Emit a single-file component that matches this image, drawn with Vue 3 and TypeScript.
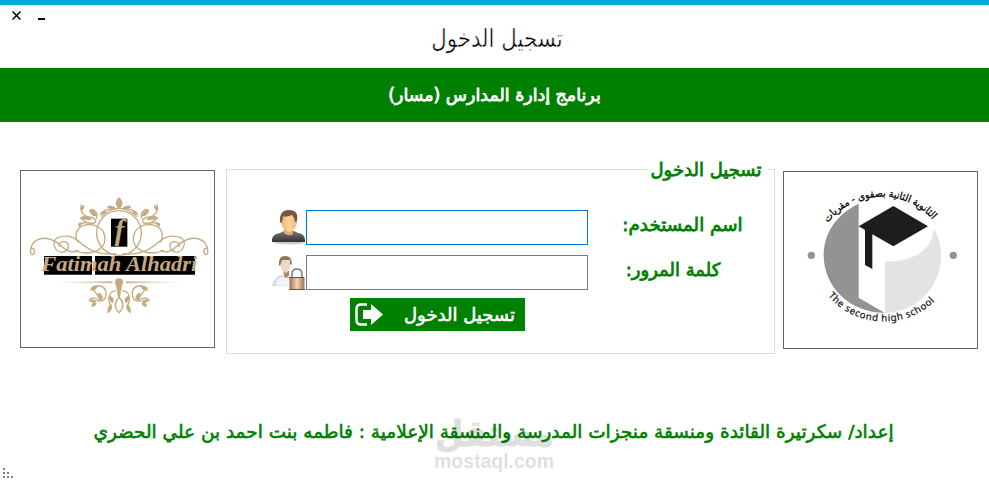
<script setup lang="ts">
import { ref } from 'vue'

const username = ref('')
const password = ref('')
</script>

<template>
  <div class="window">
    <header class="titlebar">
      <div class="controls">
        <button class="ctl" aria-label="close">
          <svg width="9" height="9" viewBox="0 0 9 9"><path d="M.5.5l8 8M8.5.5l-8 8" /></svg>
        </button>
        <button class="ctl minimize" aria-label="minimize">
          <svg width="7" height="2" viewBox="0 0 7 2"><rect width="7" height="2" /></svg>
        </button>
      </div>
      <h1 class="title"><span dir="rtl">تسجيل الدخول</span></h1>
    </header>

    <div class="banner"><span dir="rtl">برنامج إدارة المدارس (مسار)</span></div>

    <main class="content">
      <div class="logo">
        <svg width="195" height="178" viewBox="15 15 585 534">
          <defs>
            <g id="flourish">
              <path d="M303 266C250 272 220 255 190 228C170 211 150 210 128 218C105 230 122 266 145 261C165 255 166 229 145 230C135 231 129 239 133 246" />
              <path d="M190 257C162 267 151 253 138 242C110 218 85 215 64 226C46 236 42 269 52 269C62 266 60 249 50 250" />
              <path d="M191 233C175 215 184 187 207 181C239 172 270 190 270 222C270 250 240 265 210 264C201 264 192 262 180 255" />
              <path d="M200 118C192 135 205 155 223 156C239 156 248 171 237 174C224 177 207 171 196 158M223 136C238 128 251 146 244 162M255 150C265 133 287 131 301 132M191 184Q207 167 222 176M277 127L299 130" />
              <path d="M231 371C244 356 270 361 273 382C275 398 267 409 253 407M221 407C232 395 246 397 252 410M303 377C282 379 277 399 286 420M235 368C237 389 253 385 255 407" />
              <g class="leaf">
                <path d="M208 120Q195 124 198 138Q209 134 208 120ZM195 158Q216 144 231 164Q211 168 195 158ZM222 137Q240 129 245 153Q230 156 222 137ZM259 148Q258 135 273 139Q277 147 259 148ZM190 184Q187 170 203 172Q200 181 190 184Z" />
                <path d="M280 129Q275 119 289 122Q301 124 304 132ZM226 377Q228 358 249 363Q244 378 226 377ZM250 382Q246 400 258 405Q273 396 250 382ZM222 407Q234 399 246 409Q237 419 222 407ZM230 425Q228 410 245 414Q244 425 230 425ZM278 445Q275 424 289 417Q297 432 278 445ZM280 400Q284 386 294 399Q299 410 291 415Z" />
              </g>
            </g>
            <linearGradient id="rule">
              <stop offset="0" stop-color="#c5aa80" stop-opacity="0" />
              <stop offset=".5" stop-color="#c5aa80" />
              <stop offset="1" stop-color="#c5aa80" stop-opacity="0" />
            </linearGradient>
          </defs>
          <g class="gold">
            <use href="#flourish" />
            <use href="#flourish" transform="matrix(-1 0 0 1 625 0)" />
            <circle cx="312" cy="204" r="67" />
            <path d="M258 155Q312 105 367 155" />
            <path class="leaf" d="M312 96Q296 110 307 127L312 132L318 127Q329 110 312 96Z" />
          </g>
          <rect x="288" y="161" width="49" height="84" />
          <path d="M87 273H231V329H87ZM240 273H540V329H240Z" />
          <text class="initial" x="299" y="226">f</text>
          <text class="name" x="79" y="319" textLength="468" lengthAdjust="spacingAndGlyphs">Fatimah Alhadri</text>
          <path d="M96 352L293 349V355ZM528 352L333 349V355Z" fill="url(#rule)" />
          <g class="gold">
            <circle class="leaf" cx="312" cy="352" r="12" />
            <path class="leaf" d="M303 360H321L315 397H309Z" />
            <path d="M312 397Q290 420 312 443Q335 420 312 397Z" />
          </g>
        </svg>
      </div>

      <fieldset class="login">
        <legend><span dir="rtl">تسجيل الدخول</span></legend>
        <div class="row">
          <svg class="icon" width="34" height="35" viewBox="0 0 34 35">
            <defs>
              <linearGradient id="shirt" x2="0" y2="1"><stop stop-color="#777" /><stop offset="1" stop-color="#333" /></linearGradient>
              <linearGradient id="face"><stop stop-color="#e9b27b" /><stop offset=".5" stop-color="#ffd0a0" /><stop offset="1" stop-color="#f4b77f" /></linearGradient>
            </defs>
            <ellipse cx="17" cy="33" rx="15" ry="1.5" fill="#ccc" />
            <path d="M0 32V29Q1 24 8 23L12 21H22L26 23Q33 24 33 30V32Z" fill="url(#shirt)" />
            <path d="M12 19H21V24Q17 27 12 23Z" fill="#e4ad68" />
            <path d="M9 8Q9 2 17 2T25 8V13Q23 21 17 22Q11 20 9 13Z" fill="url(#face)" />
            <path d="M8 12Q7 0 17 0T25 11L23 12Q23 8 20 5Q13 8 11 6Q11 11 9 13Z" fill="#75583e" />
          </svg>
          <input v-model="username" class="field active" type="text" aria-label="اسم المستخدم" />
          <label class="caption user"><span dir="rtl">اسم المستخدم:</span></label>
        </div>
        <div class="row">
          <svg class="icon" width="34" height="35" viewBox="0 0 34 35">
            <defs>
              <linearGradient id="lock"><stop stop-color="#987254" /><stop offset=".5" stop-color="#f3d5b4" /><stop offset="1" stop-color="#9a7555" /></linearGradient>
            </defs>
            <path d="M0 31Q2 21 10 20L18 21V31Z" fill="#d9dbe8" />
            <path d="M4 30Q4 24 10 22L18 24V31Z" fill="#f3f3f9" />
            <path d="M11 16H17V21L13 23Z" fill="#aa8763" />
            <path d="M8 7Q8 1 14 1T19 7L18 13Q16 18 13 18Q9 15 8 7Z" fill="#ead9c4" />
            <path d="M7 10Q6 1 13 1T20 10L18 9V5Q12 5 10 5L8 11Z" fill="#92765b" />
            <path d="M20 23V19Q20 14 25 14T30 19V23" fill="none" stroke="#777b80" stroke-width="1.5" />
            <rect x="17.500" y="22" width="15" height="12" fill="url(#lock)" />
            <path d="M17 34.5H33M17 22.5H32" stroke="#6e513b" />
          </svg>
          <input v-model="password" class="field" type="password" aria-label="كلمة المرور" />
          <label class="caption pass"><span dir="rtl">كلمة المرور:</span></label>
        </div>
        <button class="submit" type="button">
          <svg width="28" height="23" viewBox="0 0 28 23">
            <path d="M12 1.5H6Q1.5 1.5 1.5 6V17Q1.5 21.500 6 21.500H12" fill="none" stroke="#fff" stroke-width="2.500" />
            <path d="M8 7H16V1L28 11.500L16 22V16H8Z" fill="#fff" />
          </svg>
          <span dir="rtl">تسجيل الدخول</span>
        </button>
      </fieldset>

      <div class="logo school">
        <svg width="195" height="178" viewBox="15 18 585 534">
          <defs>
            <path id="arc-top" d="M140 186A206 206 0 0 1 474 176" />
            <path id="arc-bottom" d="M150 392A220 220 0 0 0 482 396" />
          </defs>
          <path d="M242 116C175 148 137 205 137 271C137 365 215 444 321 444L242 398Z" fill="#939393" />
          <path d="M468 191C483 215 489 245 489 272C489 365 418 440 321 444V289C400 291 462 260 468 191Z" fill="#e3e3e3" />
          <path d="M242 184L346 123L450 184L346 244L283 208V312L261 300V195Z" fill="#1d1d1d" />
          <circle cx="100" cy="271" r="11" fill="#939393" />
          <circle cx="526" cy="271" r="11" fill="#939393" />
          <text class="arabic-arc" direction="rtl"><textPath href="#arc-top" startOffset="50%" text-anchor="middle">الثانوية الثانية بصفوى - مقريات</textPath></text>
          <text class="latin-arc"><textPath href="#arc-bottom">The second high school</textPath></text>
        </svg>
      </div>
    </main>

    <footer class="credits">
      <p><span dir="rtl">إعداد/ سكرتيرة القائدة ومنسقة منجزات المدرسة والمنسقة الإعلامية : فاطمه بنت احمد بن علي الحضري</span></p>
      <svg class="watermark" width="122" height="60" viewBox="0 0 122 60">
        <text class="mark" x="1" y="32" textLength="119" lengthAdjust="spacingAndGlyphs">مستقل</text>
        <text class="site" x="0" y="54" textLength="120" lengthAdjust="spacingAndGlyphs">mostaql.com</text>
      </svg>
    </footer>

    <svg class="grip" width="12" height="12" viewBox="0 0 12 12">
      <path d="M0 0h2v2H0zM0 4h2v2H0zM4 4h2v2H4zM0 8h2v2H0zM4 8h2v2H4zM8 8h2v2H8z" />
    </svg>
  </div>
</template>

<style>
body {
  margin: 0;
  background: #fff;
}
</style>

<style scoped>
.window {
  position: relative;
  box-sizing: border-box;
  width: 989px;
  height: 482px;
  overflow: hidden;
  border-top: 5px solid #00aedb;
  background: #fff;
  font-family: "DejaVu Sans", sans-serif;
}
span[dir] {
  display: inline-block;
  white-space: nowrap;
}
button {
  padding: 0;
  border: 0;
  background: none;
  font-family: inherit;
}
.titlebar {
  height: 63px;
}
.controls {
  display: flex;
  height: 18px;
  padding: 6px 0 0 12px;
  box-sizing: border-box;
}
.ctl {
  display: flex;
  width: 26px;
  height: 9px;
}
.ctl path {
  fill: none;
  stroke: #000;
  stroke-width: 1.5;
}
.minimize {
  align-items: flex-end;
}
.title {
  display: flex;
  justify-content: center;
  margin: 0;
  padding-left: 5px;
  color: #000;
  font-size: 24px;
  font-weight: 400;
  line-height: 32px;
}
.title span {
  transform: scale(0.89, 1.06);
  -webkit-text-stroke: 0.5px #fff;
}
.banner {
  display: flex;
  align-items: center;
  justify-content: center;
  height: 54px;
  background: #008000;
  color: #fff;
  font-size: 17.4px;
  -webkit-text-stroke: 0.8px currentColor;
}
.content {
  display: flex;
  align-items: flex-start;
  height: 234px;
  padding: 39px 0 0 20px;
  box-sizing: border-box;
}
.logo {
  flex: none;
  width: 193px;
  height: 176px;
  margin-top: 9px;
  overflow: hidden;
  border: 1px solid #646464;
}
.logo svg {
  display: block;
  margin: -1px;
}
.school {
  margin: 10px 0 0 8px;
}
.gold {
  fill: none;
  stroke: #c5aa80;
  stroke-width: 4;
}
.leaf {
  fill: #c5aa80;
  stroke: none;
}
.initial,
.name {
  fill: #c5aa80;
  font-family: "Liberation Serif", serif;
  font-style: italic;
  font-weight: bold;
}
.initial {
  font-size: 86px;
}
.name {
  font-size: 60px;
}
.arabic-arc {
  fill: #000;
  stroke: #000;
  stroke-width: 0.8;
  font-family: "DejaVu Sans Condensed", "DejaVu Sans", sans-serif;
  font-size: 31px;
  font-stretch: condensed;
}
.latin-arc {
  fill: #111;
  stroke: #111;
  stroke-width: 0.6;
  font-family: "Noto Sans", sans-serif;
  font-size: 29px;
  letter-spacing: 1.8px;
}
.login {
  box-sizing: border-box;
  width: 549px;
  height: 193px;
  min-width: 0;
  margin: 0 0 0 11px;
  padding: 32px 0 0 45px;
  border: 1px solid #dcdcdc;
  color: #008000;
  font-size: 18px;
  -webkit-text-stroke: 0.8px currentColor;
}
.login legend {
  display: flex;
  align-items: center;
  justify-content: center;
  box-sizing: border-box;
  width: 120px;
  height: 17px;
  margin-left: 376px;
  padding: 0 4px 0 0;
}
.row {
  display: flex;
  height: 35px;
  margin-bottom: 10px;
}
.icon {
  flex: none;
}
.field {
  box-sizing: border-box;
  width: 282px;
  height: 35px;
  margin: 0;
  padding: 0 6px;
  border: 1px solid #7a7a7a;
  border-radius: 0;
  outline: none;
  background: #fff;
}
.active {
  border-color: #0078d7;
}
.caption {
  display: flex;
  align-items: center;
  justify-content: center;
  height: 28px;
}
.user {
  width: 121px;
  margin-left: 34px;
  font-size: 18.3px;
}
.pass {
  width: 94px;
  margin-left: 38px;
}
.submit {
  display: flex;
  align-items: center;
  width: 175px;
  height: 33px;
  margin: -2px 0 0 78px;
  padding-left: 5px;
  background: #008000;
  color: #fff;
  font-size: 18px;
  -webkit-text-stroke: 0.6px currentColor;
}
.submit span {
  margin-left: 21px;
}
.credits {
  position: relative;
  color: #008000;
  font-size: 18.45px;
  -webkit-text-stroke: 0.6px currentColor;
}
.credits p {
  display: flex;
  justify-content: center;
  margin: 0;
  padding: 61px 2px 0 0;
  line-height: 30px;
}
.watermark {
  position: absolute;
  top: 58px;
  left: 434px;
  overflow: visible;
  opacity: 0.12;
  color: #000;
}
.mark {
  font-size: 36px;
  font-weight: bold;
  stroke: #000;
  stroke-width: 1;
  stroke-linejoin: round;
}
.site {
  font-family: "Liberation Sans", sans-serif;
  font-size: 20px;
  font-weight: bold;
}
.grip {
  position: absolute;
  bottom: 2px;
  left: 3px;
  fill: #808080;
}
</style>
